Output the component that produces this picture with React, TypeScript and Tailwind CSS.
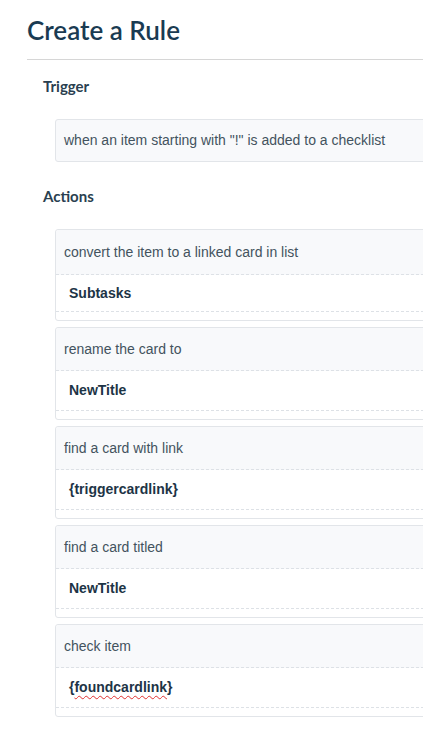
import React from "react";

type Action = { label: string; value: React.ReactNode; first?: boolean };

const actions: Action[] = [
  { label: "convert the item to a linked card in list", value: "Subtasks", first: true },
  { label: "rename the card to", value: "NewTitle" },
  { label: "find a card with link", value: "{triggercardlink}" },
  { label: "find a card titled", value: "NewTitle" },
  {
    label: "check item",
    value: (
      <>
        {"{"}
        <span className="underline decoration-wavy decoration-[#e0302f] decoration-1 underline-offset-[3px]">
          foundcardlink
        </span>
        {"}"}
      </>
    ),
  },
];

function ActionCard({ a }: { a: Action }) {
  return (
    <div className="w-[420px] border border-[#e2e5e9] rounded-[3px] bg-white flex flex-col">
      <div
        className={`${a.first ? "h-[45px]" : "h-[43px]"} bg-[#f8f9fb] rounded-t-[3px] px-[8px] flex items-center text-[14px] text-[#43535e] border-b border-dashed border-[#dde1e6]`}
      >
        {a.label}
      </div>
      <div
        className={`${a.first ? "h-[37px]" : "h-[40px]"} pl-[13px] flex items-center text-[14px] font-bold text-[#1d3446] border-b border-dashed border-[#dde1e6]`}
      >
        {a.value}
      </div>
      <div className="h-[8px]" />
    </div>
  );
}

export default function App() {
  return (
    <div
      className="w-[423px] h-[734px] overflow-hidden bg-white"
      style={{ fontFamily: '"Liberation Sans", Arial, sans-serif' }}
    >
      <div className="pl-[27px] pt-[13px]">
        <h1
          className="text-[26px] leading-[34px] font-semibold text-[#1a3b52]"
          style={{ fontFamily: "Lato, sans-serif" }}
        >
          Create a Rule
        </h1>
        <div className="mt-[12px] h-px bg-[#d6d6d6] w-[420px]" />
      </div>
      <div className="pl-[43px]">
        <h2
          className="mt-[16px] text-[15px] leading-[20px] font-bold text-[#2a3f50]"
          style={{ fontFamily: "Lato, sans-serif" }}
        >
          Trigger
        </h2>
        <div className="ml-[12px] mt-[23px] w-[420px] h-[43px] border border-[#e2e5e9] rounded-[3px] bg-[#f8f9fb] px-[8px] flex items-center text-[14px] text-[#43535e]">
          when an item starting with "!" is added to a checklist
        </div>
        <h2
          className="mt-[24px] text-[15px] leading-[20px] font-bold text-[#2a3f50]"
          style={{ fontFamily: "Lato, sans-serif" }}
        >
          Actions
        </h2>
        <div className="ml-[12px] mt-[23px] flex flex-col gap-[6px]">
          {actions.map((a, i) => (
            <ActionCard key={i} a={a} />
          ))}
        </div>
      </div>
    </div>
  );
}
